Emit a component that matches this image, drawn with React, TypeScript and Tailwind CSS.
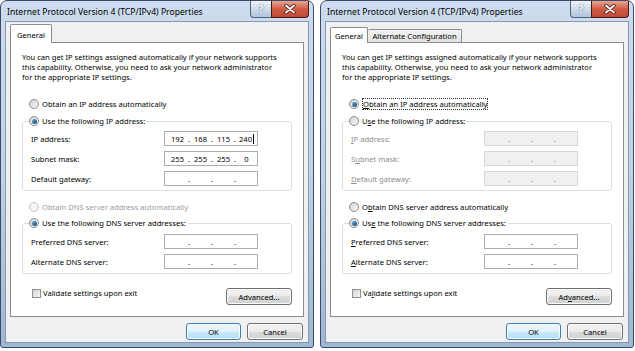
import React from 'react';

const K = ({ c }: { c: string }) => <span className="underline decoration-[0.5px] underline-offset-[1px]">{c}</span>;

// label that only shows its access key in the second dialog
const L = ({ alt, pre, key1, post }: { alt: boolean; pre: string; key1: string; post: string }) =>
  alt ? (
    <>
      {pre}
      <K c={key1} />
      {post}
    </>
  ) : (
    <>{pre + key1 + post}</>
  );

function Radio({ checked, disabled }: { checked?: boolean; disabled?: boolean }) {
  return (
    <span
      className={`flex h-[10px] w-[10px] shrink-0 items-center justify-center rounded-full border ${
        disabled ? 'border-[#c6c6c6] bg-[#f4f4f4]' : 'border-[#8a8b8c] bg-gradient-to-br from-[#cfd0d1] to-[#fbfbfb]'
      }`}
    >
      {checked && <span className="h-[5px] w-[5px] rounded-full bg-gradient-to-br from-[#6fb4d8] to-[#123d6b]" />}
    </span>
  );
}

function RadioRow({ checked, disabled, focus, children }: { checked?: boolean; disabled?: boolean; focus?: boolean; children: React.ReactNode }) {
  return (
    <div className={`flex h-[12px] items-center gap-[3px] ${disabled ? 'text-[#9a9a9a]' : 'text-black'}`}>
      <Radio checked={checked} disabled={disabled} />
      <span className={`leading-[10px] ${focus ? 'border border-dotted border-[#333]' : ''}`}>{children}</span>
    </div>
  );
}

function IpBox({ values, disabled, caret }: { values?: string[]; disabled?: boolean; caret?: boolean }) {
  const v = values ?? ['', '', '', ''];
  return (
    <div
      className={`grid h-[15px] w-[94px] shrink-0 grid-cols-[21px_2px_21px_2px_21px_2px_21px] items-center border pl-[2px] leading-[10px] ${
        disabled ? 'border-[#d6d6d6] bg-[#f0f0f0] text-[#6d6d6d]' : 'border-[#abadb3] bg-white text-black'
      }`}
    >
      {v.map((n, i) => (
        <React.Fragment key={i}>
          <span className="flex items-center justify-center">
            {n}
            {caret && i === 3 && <span className="ml-[1px] h-[10px] w-[1px] bg-black" />}
          </span>
          {i < 3 && <span className="flex justify-center">.</span>}
        </React.Fragment>
      ))}
    </div>
  );
}

function FieldRow({ label, values, disabled, caret }: { label: React.ReactNode; values?: string[]; disabled?: boolean; caret?: boolean }) {
  return (
    <div className="flex h-[15px] items-center justify-between pl-[2px]">
      <span className={disabled ? 'text-[#8d8d8d]' : 'text-black'}>{label}</span>
      <IpBox values={values} disabled={disabled} caret={caret} />
    </div>
  );
}

function Btn({ children, w, def }: { children: React.ReactNode; w: string; def?: boolean }) {
  return (
    <div
      className={`flex h-[17px] items-center justify-center rounded-[3px] border leading-[10px] shadow-[inset_0_0_0_1px_#fcfcfc] ${w} ${
        def
          ? 'border-[#3c7fb1] bg-[linear-gradient(#edf7fd,#dff2fc_50%,#c9eafb_50%,#b5dff6)]'
          : 'border-[#707070] bg-[linear-gradient(#f2f2f2,#ebebeb_50%,#dddddd_50%,#cfcfcf)]'
      }`}
    >
      {children}
    </div>
  );
}

function Dialog({ alt }: { alt: boolean }) {
  return (
    <div className="flex h-[348px] w-[314px] shrink-0 flex-col rounded-t-[7px] rounded-b-[3px] border border-[#3b4d66] bg-gradient-to-b from-[#cddcee] via-[#bfd2e8] to-[#9fb7d2] px-[4px] pb-[4px]">
      {/* title bar */}
      <div className="flex h-[21px] items-start justify-between">
        <span className="pl-[2px] pt-[5px] text-[8.6px] leading-[12px] text-black">Internet Protocol Version 4 (TCP/IPv4) Properties</span>
        <div className="flex">
          <div className="flex h-[17px] w-[21px] items-center justify-center rounded-bl-[4px] border border-t-0 border-r-0 border-[#4f627c] bg-gradient-to-b from-[#eef3f9] via-[#cfdceb] to-[#b3c6dd] text-[10px] font-bold leading-[10px] text-white [text-shadow:0_0_2px_#3a4a60]">
            ?
          </div>
          <div className="flex h-[17px] w-[38px] items-center justify-center rounded-br-[4px] border border-t-0 border-[#4a1810] bg-gradient-to-b from-[#e8a596] via-[#cf5a44] to-[#c24a33]">
            <svg width="12" height="10" viewBox="0 0 12 10">
              <path d="M2 1.5 L10 8.5 M10 1.5 L2 8.5" stroke="#4a1e18" strokeWidth="3.4" strokeLinecap="round" />
              <path d="M2 1.5 L10 8.5 M10 1.5 L2 8.5" stroke="#ffffff" strokeWidth="1.8" strokeLinecap="round" />
            </svg>
          </div>
        </div>
      </div>

      {/* client area */}
      <div className="flex flex-1 flex-col border border-[#8398b2] bg-[#f0f0f0] px-[4px] pb-[2px]">
        {/* tab strip */}
        <div className="flex h-[20px] items-end">
          {alt ? (
            <>
              <div className="relative z-10 -mb-px flex h-[16px] w-[38px] items-center justify-center rounded-t-[2px] border border-b-0 border-[#898c95] bg-white leading-[10px]">
                General
              </div>
              <div className="flex h-[13px] w-[94px] items-center justify-center rounded-t-[2px] border border-b-0 border-l-0 border-[#898c95] bg-gradient-to-b from-[#f3f3f3] to-[#e1e1e1] leading-[10px]">
                Alternate Configuration
              </div>
            </>
          ) : (
            <div className="relative z-10 -mb-px flex h-[19px] w-[42px] items-center justify-center rounded-t-[2px] border border-b-0 border-[#898c95] bg-white pt-[1px] leading-[10px]">
              General
            </div>
          )}
        </div>

        {/* tab page */}
        <div className="flex flex-col border border-[#898c95] bg-white px-[11px] pt-[9px] pb-[11px] leading-[10px]">
          <p className="leading-[10px]">
            You can get IP settings assigned automatically if your network supports
            <br />
            this capability. Otherwise, you need to ask your network administrator
            <br />
            for the appropriate IP settings.
          </p>

          <div className="mt-[16px] pl-[7px]">
            <RadioRow checked={alt} focus={alt}>
              <L alt={alt} pre="" key1="O" post="btain an IP address automatically" />
            </RadioRow>
          </div>

          <fieldset className="mt-[5px] rounded-[3px] border border-[#d5dfe5] pl-[6px] pr-[33px] pt-[4px] pb-[4px]">
            <legend className="pr-[2px]">
              <RadioRow checked={!alt}>
                <L alt={alt} pre="U" key1="s" post="e the following IP address:" />
              </RadioRow>
            </legend>
            <div className="flex flex-col gap-[5px]">
              <FieldRow label={<L alt={alt} pre="" key1="I" post="P address:" />} values={alt ? undefined : ['192', '168', '115', '240']} caret={!alt} disabled={alt} />
              <FieldRow label={<L alt={alt} pre="S" key1="u" post="bnet mask:" />} values={alt ? undefined : ['255', '255', '255', '0']} disabled={alt} />
              <FieldRow label={<L alt={alt} pre="" key1="D" post="efault gateway:" />} disabled={alt} />
            </div>
          </fieldset>

          <div className="mt-[10px] pl-[7px]">
            <RadioRow disabled={!alt}>
              <L alt={alt} pre="O" key1="b" post="tain DNS server address automatically" />
            </RadioRow>
          </div>

          <fieldset className="mt-[4px] rounded-[3px] border border-[#d5dfe5] pl-[6px] pr-[33px] pt-[5px] pb-[4px]">
            <legend className="pr-[2px]">
              <RadioRow checked>
                <L alt={alt} pre="Us" key1="e" post=" the following DNS server addresses:" />
              </RadioRow>
            </legend>
            <div className="flex flex-col gap-[5px]">
              <FieldRow label={<L alt={alt} pre="" key1="P" post="referred DNS server:" />} />
              <FieldRow label={<L alt={alt} pre="" key1="A" post="lternate DNS server:" />} />
            </div>
          </fieldset>

          <div className="mt-[13px] flex items-start justify-between pl-[10px]">
            <div className="flex h-[12px] items-center gap-[2px]">
              <span className="h-[9px] w-[9px] border border-[#8e8f8f] bg-gradient-to-br from-[#d4d4d4] to-[#f6f6f6]" />
              <span>
                <L alt={alt} pre="Va" key1="l" post="idate settings upon exit" />
              </span>
            </div>
            <div className="mt-[1px]">
              <Btn w="w-[66px] h-[16px]">
                <L alt={alt} pre="Ad" key1="v" post="anced..." />
              </Btn>
            </div>
          </div>
        </div>

        {/* dialog buttons */}
        <div className="mt-[6px] flex justify-end gap-[6px] pr-[1px]">
          <Btn w="w-[55px]" def>
            OK
          </Btn>
          <Btn w="w-[56px]">Cancel</Btn>
        </div>
      </div>
    </div>
  );
}

export default function App() {
  return (
    <div className="flex h-[351px] w-[635px] items-start gap-[6px] overflow-hidden whitespace-nowrap bg-white font-['Noto_Sans','Open_Sans',sans-serif] text-[7.6px] text-black">
      <Dialog alt={false} />
      <Dialog alt />
    </div>
  );
}
